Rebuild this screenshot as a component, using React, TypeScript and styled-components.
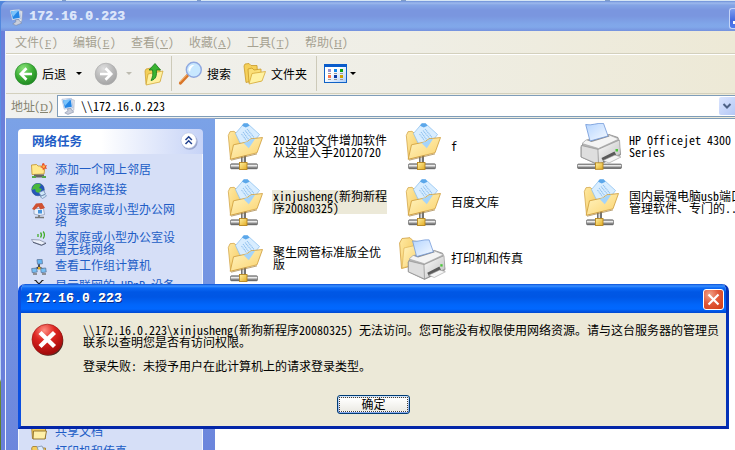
import React from 'react';
import styled, { createGlobalStyle } from 'styled-components';

const Global = createGlobalStyle`
  *, *::before, *::after { box-sizing: border-box; }
  body {
    margin: 0;
    font-family: "Noto Sans CJK SC", "Liberation Mono", sans-serif;
    font-feature-settings: "hwid", "liga" 0;
    font-variant-ligatures: none;
    font-size: 12px;
    line-height: 12px;
    white-space: pre;
    color: #000;
  }
`;

/* ---------- layout ---------- */

const Desktop = styled.div`
  position: relative;
  width: 735px;
  height: 450px;
  overflow: hidden;
  display: flex;
  flex-direction: column;
  background: linear-gradient(#4f86dc 0, #5d90e6 120px, #8ab4f0 240px, #c4dbf4 379px, #6f8f3a 382px, #55792b 450px);
`;
const BackStrip = styled.div`
  height: 1px;
  flex: none;
  background: linear-gradient(90deg, #d6e6f4 62px, #7f9cc8 62px 66px, #d6e6f4 66px 197px, #7f9cc8 197px 201px, #d6e6f4 201px 401px, #7f9cc8 401px 406px, #d6e6f4 406px 605px, #7f9cc8 605px 610px, #d6e6f4 610px);
`;
const Frame = styled.div`
  flex: 1;
  min-height: 0;
  margin-left: 1px;
  display: flex;
  flex-direction: column;
  border-radius: 7px 0 0 0;
  background: #6a7fda;
  overflow: hidden;
`;
const TitleBar = styled.div`
  height: 30px;
  flex: none;
  display: flex;
  align-items: center;
  padding: 2px 0 0 7px;
  gap: 4px;
  background: linear-gradient(#6c8fd8 0, #9db9ed 2px, #84a5e6 4px, #7a96df 9px, #7a96df 15px, #80a6e9 23px, #81a8ea 26px, #7592de 30px);
  color: #dbe5fa;
`;
const TitleText = styled.span<{ $shadow?: boolean }>`
  font-family: "Liberation Mono", monospace;
  font-weight: bold;
  font-size: 13px;
  letter-spacing: 0.2px;
  line-height: 14px;
  text-shadow: ${p => (p.$shadow ? '1px 1px 0 #0a2a85, 0.4px 0 0 #fff' : '0.4px 0 0 #dbe5fa')};
`;
const MinButton = styled.div`
  margin-left: auto;
  width: 6px;
  height: 21px;
  margin-top: 2px;
  border: 1px solid #c4d4f7;
  border-right: 0;
  border-radius: 3px 0 0 3px;
  background: linear-gradient(#7d9df0, #4669de 60%, #4f7cf0);
  display: flex;
  align-items: flex-end;
  justify-content: flex-end;
  padding-bottom: 4px;
`;
const MinDash = styled.i`
  width: 2px;
  height: 3px;
  background: #fff;
`;
const Client = styled.div`
  flex: 1;
  min-height: 0;
  margin-left: 4px;
  border-left: 1px solid #eef2fd;
  display: flex;
  flex-direction: column;
`;
const Chrome = styled.div`
  flex: none;
  background: linear-gradient(90deg, #f1f1ef, #efeee5 55%, #ede9d6);
`;
const MenuBar = styled.div`
  height: 23px;
  display: flex;
  align-items: center;
  gap: 16px;
  padding-left: 9px;
  color: #a5a191;
  border-bottom: 1px solid #d3d0bd;
`;
const MenuItem = styled.span`
  width: 42px;
`;
const Mnemonic = styled.u`
  font-family: "Liberation Serif", serif;
  font-size: 11px;
  text-underline-offset: 1px;
  display: inline-flex;
  justify-content: center;
  width: 8px;
  line-height: 10px;
`;
const Paren = styled.span<{ $open?: boolean }>`
  display: inline-flex;
  width: 5px;
  justify-content: ${p => (p.$open ? 'flex-end' : 'flex-start')};
`;
const ToolBar = styled.div`
  height: 40px;
  display: flex;
  align-items: center;
  padding: 0 0 1px 8px;
  border-top: 1px solid #fff;
  border-bottom: 1px solid #d3d0bd;
`;
const ToolButton = styled.span<{ $l?: number }>`
  display: flex;
  align-items: center;
  gap: 4px;
  margin-left: ${p => p.$l || 0}px;
`;
const Caret = styled.i<{ $l: number; $muted?: boolean }>`
  margin-left: ${p => p.$l}px;
  border: 3px solid transparent;
  border-top-color: ${p => (p.$muted ? '#bdbbb0' : '#000')};
  border-bottom: 0;
  width: 6px;
`;
const Sep = styled.i<{ $l: number; $r: number }>`
  width: 1px;
  height: 35px;
  background: #cdcab9;
  margin: 0 ${p => p.$r}px 0 ${p => p.$l}px;
`;
const AddressBar = styled.div`
  height: 24px;
  display: flex;
  align-items: center;
  color: #85836f;
  padding: 1px 0 1px 5px;
`;
const AddressLabel = styled.span`
  width: 46px;
`;
const AddressField = styled.div`
  flex: 1;
  height: 22px;
  display: flex;
  align-items: center;
  gap: 4px;
  padding-left: 2px;
  border: 1px solid #7f9db9;
  border-right: 0;
  background: #fff;
  color: #000;
`;
const DropButton = styled.div`
  width: 16px;
  height: 18px;
  margin-left: auto;
  border-radius: 2px 0 0 2px;
  background: linear-gradient(135deg, #dbe5fe, #b4c8f6);
  display: grid;
  place-items: center;
`;
const Body = styled.div`
  flex: 1;
  min-height: 0;
  display: flex;
  background: #fff;
`;
const SideBar = styled.aside`
  width: 209px;
  flex: none;
  padding: 10px 12px 0;
  background: linear-gradient(#7ba2e7, #6375d6 520px);
  border-top: 1px solid #90a6cf;
  display: flex;
  flex-direction: column;
`;
const PanelHead = styled.div`
  height: 25px;
  flex: none;
  display: flex;
  align-items: center;
  justify-content: space-between;
  padding: 0 4px 2px 14px;
  border-radius: 4px 4px 0 0;
  background: linear-gradient(90deg, #fff 45%, #c6d3f7);
  color: #215dc6;
  font-weight: bold;
  font-size: 12.5px;
`;
const PanelBody = styled.div`
  flex: 1;
  min-height: 0;
  overflow: hidden;
  padding: 9px 0 0 12px;
  display: flex;
  flex-direction: column;
  gap: 4px;
  border: 1px solid #f2f5fd;
  border-width: 0 1px;
  background: #d6dff7;
  color: #215dc6;
`;
const Task = styled.div<{ $gap?: number }>`
  display: flex;
  flex: none;
  gap: 8px;
  min-height: 16px;
  margin-top: ${p => p.$gap || 0}px;
`;
const Files = styled.main`
  flex: 1;
  min-width: 0;
  overflow: hidden;
  display: grid;
  grid-template-columns: repeat(3, 178px);
  grid-auto-rows: 56px;
  align-content: start;
  padding: 4px 0 0 6px;
  border-top: 1px solid #7f9db9;
`;
const File = styled.div`
  display: flex;
  align-items: center;
  gap: 3px;
  height: 48px;
`;
const FileName = styled.span<{ $selected?: boolean }>`
  padding: 0 1px;
  margin-top: -2px;
  width: ${p => (p.$selected ? '115px' : 'auto')};
  background: ${p => (p.$selected ? '#ece9d8' : 'transparent')};
`;

/* ---------- dialog ---------- */

const Dialog = styled.section`
  position: absolute;
  left: 18px;
  top: 284px;
  width: 711px;
  height: 145px;
  display: flex;
  flex-direction: column;
  border-radius: 7px 7px 0 0;
  border: 3px solid #0b4fe0;
  border-top: 0;
  border-right-color: #0432b8;
  border-bottom-color: #0326a8;
  background: #ece9d8;
  overflow: hidden;
`;
const DialogTitle = styled.div`
  height: 29px;
  flex: none;
  margin: 0 -3px;
  padding: 1px 5px 0 8px;
  display: flex;
  align-items: center;
  justify-content: space-between;
  color: #fff;
  background: linear-gradient(#0a50d8 0, #3a90ff 2px, #0c6af6 4px, #0057e5 8px, #0056e4 13px, #0166fb 21px, #0168ff 25px, #0048d0 29px);
`;
const CloseButton = styled.button`
  width: 21px;
  height: 21px;
  padding: 0;
  display: grid;
  place-items: center;
  border: 1px solid #fff;
  border-radius: 3px;
  background: radial-gradient(circle at 30% 25%, #f0a58c, #e2593a 45%, #d03a12);
`;
const DialogBody = styled.div`
  display: flex;
  gap: 18px;
  padding: 10px 0 0 10px;
`;
const Message = styled.p`
  margin: 1px 0 0;
`;
const OkButton = styled.button`
  width: 73px;
  height: 19px;
  margin: 23px auto 0 316px;
  padding: 1px;
  border: 1px solid #003c74;
  border-radius: 3px;
  background: linear-gradient(#cee3fc, #89a9ee);
  font: inherit;
  font-feature-settings: inherit;
  color: #000;
`;
const OkFace = styled.span`
  display: block;
  height: 15px;
  line-height: 12px;
  border: 1px dotted #443f38;
  background: linear-gradient(#fff, #ecebe5);
`;

/* ---------- icons ---------- */

const ComputerIcon = () => (
  <svg width="17" height="17" viewBox="0 0 16 16">
    <path d="M10 1l3.500 1-.5 9.500-3 1z" fill="#e3e7ee" stroke="#9aa5ba" strokeWidth=".5" />
    <path d="M1.800 1.200l8.900-.9 1.500 8.700L4 10.500z" fill="#e8f0fa" stroke="#8ea5cf" strokeWidth=".5" />
    <path d="M2.700 2l7.300-.7 1.200 7-6.600 1.100z" fill="#2386e6" />
    <path d="M2.700 2l7.300-.7L4.600 7.500z" fill="#7cc3fa" />
    <path d="M7 10.300l3-.5 1 1.700 2 1.700-5.500 2.300-3-1.500L7.500 12z" fill="#c9cedb" stroke="#7784a0" strokeWidth=".5" />
  </svg>
);

const ArrowCircle = ({ back }: { back?: boolean }) => (
  <svg width="24" height="24" viewBox="0 0 24 24">
    <defs>
      <radialGradient id={back ? 'gb' : 'gf'} cx=".38" cy=".25" r=".8">
        <stop offset="0" stopColor={back ? '#8be27c' : '#dedede'} />
        <stop offset=".55" stopColor={back ? '#3cae35' : '#bababa'} />
        <stop offset="1" stopColor={back ? '#1d8520' : '#a2a2a2'} />
      </radialGradient>
    </defs>
    <circle cx="12" cy="12" r="10.8" fill={`url(#${back ? 'gb' : 'gf'})`} stroke={back ? '#258a29' : '#aaa'} strokeWidth=".7" />
    <path d={back ? 'M12.5 6.2L6.8 12l5.7 5.8M7.3 12H18' : 'M11.5 6.2l5.7 5.8-5.7 5.8M16.7 12H6'} fill="none" stroke="#fff" strokeWidth="2.7" />
  </svg>
);

const UpFolderIcon = () => (
  <svg width="20" height="24" viewBox="0 0 20 24">
    <path d="M1 9l1-2 5-1 2 2 7-1v12l-14 3z" fill="#f3cf58" stroke="#c99a2a" strokeWidth=".7" />
    <path d="M4 12l15-3-3 11-14 3z" fill="#fff0a0" stroke="#cfa02b" strokeWidth=".7" />
    <path d="M7 18.500c5-1 6-5 5.300-10.500H16.500L11 1.500 5 8h3.500c.8 4 0 7.500-1.500 10.500z" fill="#39b431" stroke="#17771b" strokeWidth=".8" />
  </svg>
);

const SearchIcon = () => (
  <svg width="25" height="25" viewBox="0 0 25 25">
    <path d="M2.500 22L9.500 14.500" stroke="#d9762a" strokeWidth="3.200" strokeLinecap="round" />
    <path d="M1.800 21L9 13.700" stroke="#f7b56b" strokeWidth="1" />
    <circle cx="15.800" cy="8.700" r="7.500" fill="#c8e8ff" stroke="#8fa8e0" strokeWidth="1.400" />
    <path d="M10.500 9c0-4 3-5.500 6-5-2 1-4 3-4.500 7z" fill="#fff" />
  </svg>
);

const FoldersIcon = () => (
  <svg width="24" height="22" viewBox="0 0 24 22">
    <path d="M1 3l1-2 4-.5 2 2 6 0 1 14-12 3z" fill="#f5d05a" stroke="#c99a2a" strokeWidth=".8" />
    <path d="M5 6l4-1 2 2 7-1v12l-12 2z" fill="#fadf77" stroke="#c99a2a" strokeWidth=".8" />
    <path d="M9 10.500l13.500-2-3.500 9.500-13 3z" fill="#fff2a2" stroke="#d6a938" strokeWidth=".8" />
  </svg>
);

const ViewsIcon = () => (
  <svg width="23" height="19" viewBox="0 0 23 19">
    <defs>
      <linearGradient id="vw" x2="1" y2="1"><stop offset=".4" stopColor="#fff" /><stop offset="1" stopColor="#a9cbf8" /></linearGradient>
    </defs>
    <rect x=".5" y=".5" width="22" height="18" fill="url(#vw)" stroke="#0f62c6" />
    <rect width="23" height="3" fill="#0a5ccb" />
    {['#9a92cf', '#1387ea', '#0aa012', '#ff7549', '#0b3aa5', '#d0a000'].map((c, i) => (
      <g key={c} transform={`translate(${4 + (i % 3) * 6} ${5 + Math.floor(i / 3) * 6})`}>
        <rect width="3" height="3" fill={c} />
        <rect y="4" width="3" height="1" fill="#999" />
      </g>
    ))}
  </svg>
);

const Chevron = () => (
  <svg width="10" height="8" viewBox="0 0 10 8"><path d="M1.500 2L5 5.500 8.500 2" fill="none" stroke="#4d6185" strokeWidth="2" /></svg>
);

const CollapseIcon = () => (
  <svg width="20" height="20" viewBox="0 0 20 20">
    <circle cx="10.600" cy="10.800" r="8" fill="#98a5cc" />
    <circle cx="9.700" cy="9.500" r="7.700" fill="#fff" stroke="#b7c2e0" strokeWidth=".6" />
    <path d="M6.500 9l3.200-3.200L12.900 9M6.500 13l3.200-3.200 3.200 3.200" fill="none" stroke="#21418f" strokeWidth="1.500" />
  </svg>
);

const SharedFolder = () => (
  <svg width="48" height="48" viewBox="0 0 48 48">
    <defs>
      <linearGradient id="sfb" x2="1" y2=".6"><stop stopColor="#ffe9a2" /><stop offset="1" stopColor="#f3c658" /></linearGradient>
      <linearGradient id="sff" x2="1" y2="1"><stop stopColor="#fff5c4" /><stop offset="1" stopColor="#fbd26c" /></linearGradient>
      <linearGradient id="pipe" x2="0" y2="1"><stop stopColor="#777" /><stop offset=".35" stopColor="#eee" /><stop offset="1" stopColor="#444" /></linearGradient>
      <linearGradient id="knot" x2="1" y2="1"><stop stopColor="#fff0a0" /><stop offset="1" stopColor="#e3ab22" /></linearGradient>
    </defs>
    <path d="M7.300 12.500l1.700-3.800 4-.4 3.500 3 11 1-2 20-16 3.700z" fill="url(#sfb)" stroke="#cf9d3c" strokeWidth=".7" />
    <path d="M23 .5h3.500L38.500 11.500 29 24 19 20l-4.500-9.500z" fill="#d8edff" stroke="#84bbee" strokeWidth=".7" />
    <path d="M22.500.5h4.200l1.800 2.300-3.700 1.700-3.800-1.700z" fill="#5ba7ea" />
    <path d="M22 9l6 8M24 7.500l7 8.500M26 6l7 8.500M20.500 11l5 6.500" stroke="#8fc0ee" strokeWidth="1.100" strokeDasharray="1.300 .6" />
    <path d="M20 32h5v9h-5z" fill="#747474" />
    <path d="M21.500 32h1.500v9h-1.500z" fill="#ddd" />
    <path d="M9.200 36.300L12.500 21.800 25.500 19l4.500-3.200 11.500-1.300-5.500 15.300z" fill="url(#sff)" stroke="#cd9a38" strokeWidth=".8" />
    <path d="M22.500 20l4-1.200 3.700-2.500 4-.5-6.400 9.500z" fill="#a4d4fb" />
    <path d="M10 37.200l26-6.300" stroke="#a17d3c" strokeWidth=".7" />
    <rect x="9.500" y="40.800" width="27" height="5" rx="1" fill="url(#pipe)" stroke="#555" strokeWidth=".6" />
    <rect x="18.500" y="39.500" width="7.500" height="7" fill="url(#knot)" stroke="#b88720" strokeWidth=".9" />
  </svg>
);

const PrinterShape = () => (
  <g>
    <defs>
      <linearGradient id="prt" x2="1" y2="1"><stop stopColor="#fcfcfc" /><stop offset="1" stopColor="#bdbdbd" /></linearGradient>
      <linearGradient id="ppr" x2="1" y2="1"><stop stopColor="#b5d5ff" /><stop offset="1" stopColor="#f6faff" /></linearGradient>
    </defs>
    <path d="M4 24l3-5 25-7.500 9 3 2.500 17.500-22 10L4 34z" fill="#b5b5b5" stroke="#888" strokeWidth=".8" />
    <path d="M5 20.500l4-3.500 22-5.500 11 4.500-20.500 9.500z" fill="#f4f4f4" stroke="#a5a5a5" strokeWidth=".7" />
    <path d="M9.500 17L31 11.500l1.500 2-18 5.500z" fill="#909090" />
    <path d="M8.700 1.500C15 3 20-.5 26.500.4L31 13l-18 5z" fill="url(#ppr)" stroke="#6f97d8" strokeWidth=".8" />
    <path d="M4.300 22.500l17 4 .2 15L4.300 34z" fill="#dedede" stroke="#8b8b8b" strokeWidth=".6" />
    <path d="M21 26.500L42.500 17l1 14-22 10.500z" fill="url(#prt)" stroke="#8b8b8b" strokeWidth=".6" />
    <path d="M24.500 35l13-6.500 2 4-13 6.500z" fill="#5a5a5a" />
    <path d="M26 37.500l12-5.500 6 2-12 6z" fill="#f5f5f5" stroke="#999" strokeWidth=".6" />
    <rect x="38.500" y="26" width="2.500" height="2.500" fill="#4bc63b" />
  </g>
);

const NetPrinter = () => (
  <svg width="48" height="48" viewBox="0 0 48 48">
    <PrinterShape />
    <rect x=".5" y="41" width="44" height="4.500" rx="1" fill="url(#pipe)" stroke="#555" strokeWidth=".6" />
    <rect x="18.500" y="39.800" width="7.500" height="6.500" fill="url(#knot)" stroke="#b88720" strokeWidth=".9" />
  </svg>
);

const PrinterFolder = () => (
  <svg width="48" height="48" viewBox="0 0 48 48">
    <path d="M.6 8L3 3.500l8-.8 3.500 3.500 7 .5v22L2.500 33.500z" fill="url(#sfb)" stroke="#cf9d3c" strokeWidth=".8" />
    <path d="M5 13l13-3v19L3 33z" fill="url(#sff)" stroke="#d9ab4b" strokeWidth=".6" />
    <g transform="translate(5.500 4.500) scale(.93 .95)"><PrinterShape /></g>
  </svg>
);

const AddPlaceIcon = () => (
  <svg width="16" height="16" viewBox="0 0 16 16">
    <path d="M.5 2l5-.5 1.500 1.500 7 0-1 8L1 11.500z" fill="#ffe98d" stroke="#c3922a" strokeWidth=".8" />
    <path d="M3 11.500h10v3H3z" fill="#666" /><path d="M1 14h4M11 14h4" stroke="#54a64a" strokeWidth="1.800" />
    <path d="M13 0l1 2.500 2-.5-1 2 1 2-2.500-.5L12 7.500l-.6-2.500L9 4l2.200-1L11 .8z" fill="#e8512b" />
    <circle cx="12.700" cy="3.600" r="1.300" fill="#ffb648" />
  </svg>
);
const GlobeIcon = () => (
  <svg width="16" height="16" viewBox="0 0 16 16">
    <circle cx="7" cy="6.500" r="6.300" fill="#2456b8" stroke="#23428a" strokeWidth=".5" />
    <path d="M3 2c3-2 6-1 7 0L8 5l3 1-3 4-3-1-1-3-3 1c0-2 1-4 2-5z" fill="#48b83c" />
    <path d="M8 9.500l4.500-2 2 3.500-4.500 2zM9 13.500l5-2 1.500 1.500-4 2.500z" fill="#cfe7fa" stroke="#6c86ae" strokeWidth=".7" />
  </svg>
);
const HomeIcon = () => (
  <svg width="16" height="16" viewBox="0 0 16 16">
    <path d="M3 5.500h9.500l1 6-4.500 1L3 11z" fill="#e9f1fc" stroke="#8894b0" strokeWidth=".7" />
    <path d="M1 6l4-5.500 6-.5L14 5 9.500 6.500 7.500 3.500 3.500 7z" fill="#cf5133" />
    <path d="M7 7h4v3.500H7z" fill="#4794dd" /><path d="M8 12v2M4 14.500h9" stroke="#777" strokeWidth="1.700" />
  </svg>
);
const WirelessIcon = () => (
  <svg width="16" height="16" viewBox="0 0 16 16">
    <path d="M.5 8.500l8 .5 6.500 3-4.500 2L2 11z" fill="#edf1fa" stroke="#8a92aa" strokeWidth=".8" />
    <path d="M2 11.300l8.500 3 4.500-2" fill="none" stroke="#596177" strokeWidth="1" />
    <path d="M7 3v3M9.500 1.500q2 2.500 0 5M12.200.5q2.500 3.500 0 7" fill="none" stroke="#43ac2b" strokeWidth="1.300" />
  </svg>
);
const WorkgroupIcon = () => (
  <svg width="16" height="16" viewBox="0 0 16 16">
    <path d="M8 5v5M3 11l5-3 5 3" stroke="#353f4e" strokeWidth="1.800" fill="none" />
    <path d="M6 .7l5-.5.500 4.500-5 .5z" fill="#65b7f4" stroke="#61789c" strokeWidth=".8" />
    <path d="M.7 9.500l5-.5.500 4-5 .7zM9.700 9.500l5-.5.500 4-5 .7z" fill="#76c0f4" stroke="#61789c" strokeWidth=".8" />
    <path d="M7 8h2.500v2.500H7z" fill="#dfad22" /><path d="M2 15h4M11 15h4" stroke="#777" strokeWidth="1.300" />
  </svg>
);
const UpnpIcon = () => (
  <svg width="16" height="16" viewBox="0 0 16 16">
    <path d="M5 2l3 3 3-3M3.500 1.500h2M10.500 1.500h2M8 5v8" stroke="#222" strokeWidth="1.100" fill="none" />
  </svg>
);
const SmallFolder = ({ printer }: { printer?: boolean }) => (
  <svg width="16" height="16" viewBox="0 0 16 16">
    <path d="M.7 3l1-1.500h4L7 3h7.500v10.500H1.500z" fill="#f5cd5b" stroke="#9c7628" strokeWidth=".8" />
    <path d="M2.500 6h13L14 14H2z" fill="#fff0a8" stroke="#8c6d28" strokeWidth=".9" />
    {printer && <path d="M6 2l5-1 3 6H8z" fill="#dbeafe" stroke="#76869f" strokeWidth=".7" />}
  </svg>
);

const ErrorIcon = () => (
  <svg width="34" height="34" viewBox="0 0 34 34">
    <defs>
      <radialGradient id="er" cx=".4" cy=".2" r=".85">
        <stop stopColor="#ff8f83" /><stop offset=".4" stopColor="#df2722" /><stop offset="1" stopColor="#990506" />
      </radialGradient>
    </defs>
    <circle cx="17.300" cy="17.800" r="15" fill="#4a2a22" />
    <circle cx="16.300" cy="16.500" r="15.300" fill="url(#er)" stroke="#a21816" strokeWidth=".7" />
    <path d="M9 9.500l14.500 14M23.500 9.500l-14.500 14" stroke="#fff" strokeWidth="4.400" />
  </svg>
);
const CloseX = () => (
  <svg width="13" height="13" viewBox="0 0 13 13"><path d="M1.500 1.500l10 10M11.500 1.500l-10 10" stroke="#fff" strokeWidth="2.200" /></svg>
);

/* ---------- content ---------- */

const menus = [['文件', 'F'], ['编辑', 'E'], ['查看', 'V'], ['收藏', 'A'], ['工具', 'T'], ['帮助', 'H']];

const Key = ({ k }: { k: string }) => (
  <>
    <Paren $open>(</Paren><Mnemonic>{k}</Mnemonic><Paren>)</Paren>
  </>
);

const tasks: { icon: React.ReactNode; text: string; gap?: number }[] = [
  { icon: <AddPlaceIcon />, text: '添加一个网上邻居' },
  { icon: <GlobeIcon />, text: '查看网络连接' },
  { icon: <HomeIcon />, text: '设置家庭或小型办公网\n络' },
  { icon: <WirelessIcon />, text: '为家庭或小型办公室设\n置无线网络' },
  { icon: <WorkgroupIcon />, text: '查看工作组计算机' },
  { icon: <UpnpIcon />, text: '显示联网的 UPnP 设备' },
  { icon: <SmallFolder />, text: '共享文档', gap: 126 },
  { icon: <SmallFolder printer />, text: '打印机和传真' },
];

const files: { icon: React.ReactNode; text: string; selected?: boolean }[] = [
  { icon: <SharedFolder />, text: '2012dat文件增加软件\n从这里入手20120720' },
  { icon: <SharedFolder />, text: 'f' },
  { icon: <NetPrinter />, text: 'HP Officejet 4300\nSeries' },
  { icon: <SharedFolder />, text: 'xinjusheng(新狗新程\n序20080325)', selected: true },
  { icon: <SharedFolder />, text: '百度文库' },
  { icon: <SharedFolder />, text: '国内最强电脑usb端口\n管理软件、专门的...' },
  { icon: <SharedFolder />, text: '聚生网管标准版全优\n版' },
  { icon: <PrinterFolder />, text: '打印机和传真' },
];

export default function App() {
  return (
    <Desktop>
      <Global />
      <BackStrip />
      <Frame>
        <TitleBar>
          <ComputerIcon />
          <TitleText>172.16.0.223</TitleText>
          <MinButton><MinDash /></MinButton>
        </TitleBar>
        <Client>
          <Chrome>
            <MenuBar>
              {menus.map(([name, k]) => <MenuItem key={k}>{name}<Key k={k} /></MenuItem>)}
            </MenuBar>
            <ToolBar>
              <ToolButton><ArrowCircle back />后退</ToolButton>
              <Caret $l={10} />
              <ToolButton $l={12}><ArrowCircle /></ToolButton>
              <Caret $l={8} $muted />
              <ToolButton $l={12}><UpFolderIcon /></ToolButton>
              <Sep $l={7} $r={6} />
              <ToolButton>
                <SearchIcon />搜索
              </ToolButton>
              <ToolButton $l={12}><FoldersIcon />文件夹</ToolButton>
              <Sep $l={9} $r={7} />
              <ViewsIcon />
              <Caret $l={3} />
            </ToolBar>
            <AddressBar>
              <AddressLabel>地址<Key k="D" /></AddressLabel>
              <AddressField>
                <ComputerIcon />
                <span>{'\\\\172.16.0.223'}</span>
                <DropButton><Chevron /></DropButton>
              </AddressField>
            </AddressBar>
          </Chrome>
          <Body>
            <SideBar>
              <PanelHead>网络任务<CollapseIcon /></PanelHead>
              <PanelBody>
                {tasks.map(t => (
                  <Task key={t.text} $gap={t.gap}>{t.icon}<span>{t.text}</span></Task>
                ))}
              </PanelBody>
            </SideBar>
            <Files>
              {files.map(f => (
                <File key={f.text}>{f.icon}<FileName $selected={f.selected}>{f.text}</FileName></File>
              ))}
            </Files>
          </Body>
        </Client>
      </Frame>

      <Dialog>
        <DialogTitle>
          <TitleText $shadow>172.16.0.223</TitleText>
          <CloseButton><CloseX /></CloseButton>
        </DialogTitle>
        <DialogBody>
          <ErrorIcon />
          <Message>
            {'\\\\172.16.0.223\\xinjusheng(新狗新程序20080325) 无法访问。您可能没有权限使用网络资源。请与这台服务器的管理员\n联系以查明您是否有访问权限。\n\n登录失败: 未授予用户在此计算机上的请求登录类型。'}
          </Message>
        </DialogBody>
        <OkButton><OkFace>确定</OkFace></OkButton>
      </Dialog>
    </Desktop>
  );
}
